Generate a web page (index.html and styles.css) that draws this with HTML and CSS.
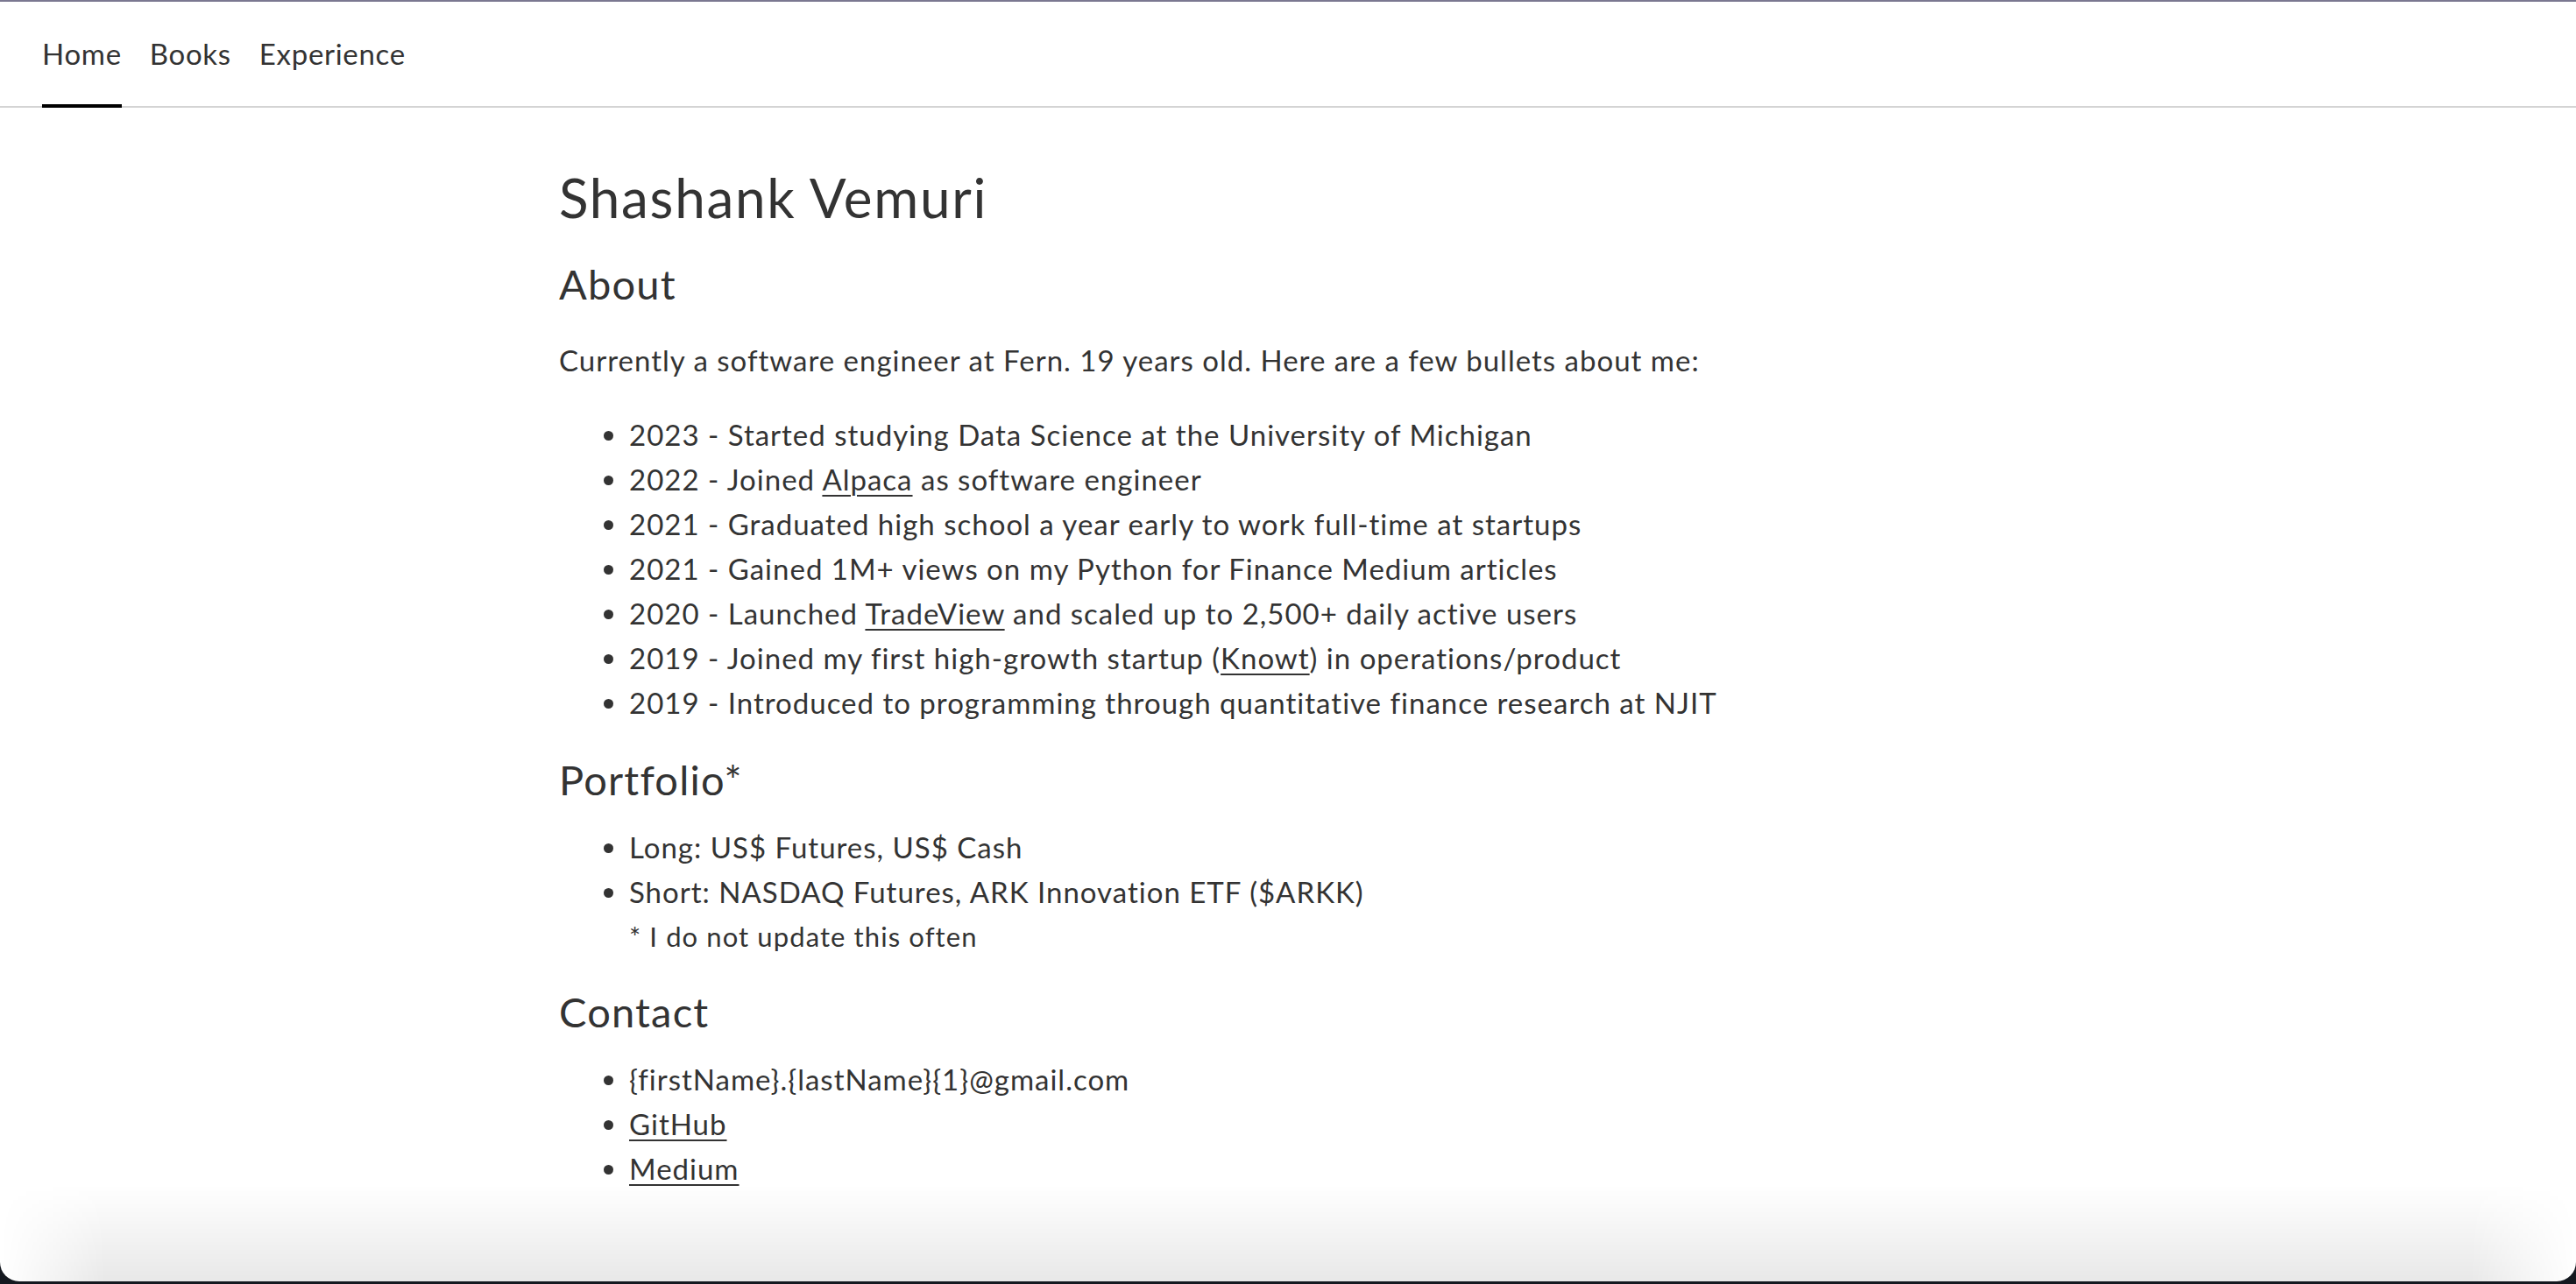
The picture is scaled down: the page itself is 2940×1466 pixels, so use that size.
FILE: index.html
```html
<!DOCTYPE html>
<html lang="en">
<head>
<meta charset="utf-8">
<title>Shashank Vemuri</title>
<link rel="stylesheet" href="styles.css">
</head>
<body>
<div class="window">
  <nav class="tabs">
    <a class="tab active" href="#">Home</a>
    <a class="tab" href="#">Books</a>
    <a class="tab" href="#">Experience</a>
  </nav>
  <main class="content">
    <h1 class="title">Shashank Vemuri</h1>
    <h2 class="section">About</h2>
    <p class="intro">Currently a software engineer at Fern. 19 years old. Here are a few bullets about me:</p>
    <ul class="list">
      <li>2023 - Started studying Data Science at the University of Michigan</li>
      <li>2022 - Joined <a href="#">Alpaca</a> as software engineer</li>
      <li>2021 - Graduated high school a year early to work full-time at startups</li>
      <li>2021 - Gained 1M+ views on my Python for Finance Medium articles</li>
      <li>2020 - Launched <a href="#">TradeView</a> and scaled up to 2,500+ daily active users</li>
      <li>2019 - Joined my first high-growth startup (<a href="#">Knowt</a>) in operations/product</li>
      <li>2019 - Introduced to programming through quantitative finance research at NJIT</li>
    </ul>
    <h2 class="section">Portfolio*</h2>
    <ul class="list">
      <li>Long: US$ Futures, US$ Cash</li>
      <li>Short: NASDAQ Futures, ARK Innovation ETF ($ARKK)</li>
    </ul>
    <p class="note">* I do not update this often</p>
    <h2 class="section">Contact</h2>
    <ul class="list">
      <li>{firstName}.{lastName}{1}@gmail.com</li>
      <li><a href="#">GitHub</a></li>
      <li><a href="#">Medium</a></li>
    </ul>
  </main>
  <div class="bottom-shade"></div>
</div>
</body>
</html>
```
FILE: styles.css
```css
html, body {
  margin: 0;
  padding: 0;
  background: #14181f;
}
body {
  font-family: Lato, "Noto Sans", sans-serif;
  color: #333333;
  overflow: hidden;
}
.window {
  position: relative;
  height: 1463px;
  background: #ffffff;
  border-top: 2px solid #7b7891;
  border-radius: 0 0 22px 22px;
  overflow: hidden;
  box-sizing: border-box;
}
.tabs {
  display: flex;
  align-items: stretch;
  height: 121px;
  box-sizing: border-box;
  padding: 0 0 2px 48px;
  border-bottom: 2px solid #d4d4d4;
  gap: 32px;
}
.tab {
  display: flex;
  align-items: center;
  position: relative;
  font-size: 33px;
  letter-spacing: 0.7px;
  color: #333333;
  text-decoration: none;
}
.tab.active::after {
  content: "";
  position: absolute;
  left: 0;
  right: 0;
  bottom: -4px;
  height: 4px;
  background: #000000;
}
.content {
  width: 1664px;
  margin: 0 auto;
}
.title {
  font-size: 62px;
  font-weight: 400;
  letter-spacing: 1.7px;
  line-height: 72px;
  margin: 66px 0 0;
}
.section {
  font-size: 47px;
  font-weight: 400;
  letter-spacing: 1.2px;
  line-height: 52px;
  margin: 36px 0 0;
}
.title + .section {
  margin-top: 37px;
}
.note + .section {
  margin-top: 34px;
}
.intro {
  font-size: 33px;
  letter-spacing: 1px;
  line-height: 51px;
  margin: 36px 0 0;
}
.list {
  font-size: 33px;
  letter-spacing: 1px;
  line-height: 51px;
  margin: 26px 0 0;
  padding-left: 80px;
}
.intro + .list {
  margin-top: 34px;
}
.list a {
  color: #333333;
  text-decoration: underline;
  text-underline-offset: 5px;
  text-decoration-thickness: 2px;
}
.note {
  font-size: 31px;
  letter-spacing: 1.1px;
  line-height: 51px;
  margin: 0;
  padding-left: 80px;
}
.bottom-shade {
  position: absolute;
  left: 0;
  right: 0;
  bottom: 0;
  height: 110px;
  background: linear-gradient(to bottom, rgba(0,0,0,0), rgba(0,0,0,0.09));
  -webkit-mask-image: linear-gradient(to right, transparent 0, #000 120px, #000 calc(100% - 120px), transparent 100%);
  mask-image: linear-gradient(to right, transparent 0, #000 120px, #000 calc(100% - 120px), transparent 100%);
  pointer-events: none;
}
```
